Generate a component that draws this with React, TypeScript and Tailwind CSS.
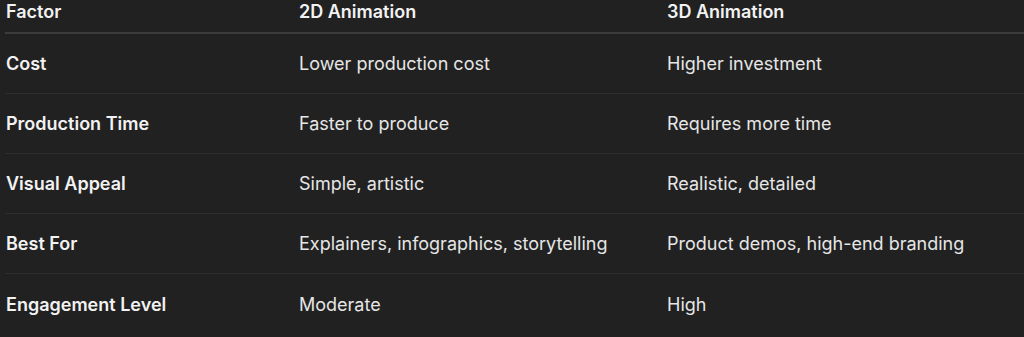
const rows = [
  ['Cost', 'Lower production cost', 'Higher investment'],
  ['Production Time', 'Faster to produce', 'Requires more time'],
  ['Visual Appeal', 'Simple, artistic', 'Realistic, detailed'],
  ['Best For', 'Explainers, infographics, storytelling', 'Product demos, high-end branding'],
  ['Engagement Level', 'Moderate', 'High'],
];

export default function App() {
  return (
    <div className="w-[1024px] h-[337px] overflow-hidden bg-[#212121] font-['Inter','Noto_Sans',sans-serif] text-[18px]">
      <div className="ml-[5px]">
        <div className="grid grid-cols-[294px_368px_1fr] h-[34px] border-b-2 border-[#3b3b3b] font-semibold text-[#f2f2f2] leading-[24px]">
          <div className="pl-[1px]">Factor</div>
          <div>2D Animation</div>
          <div>3D Animation</div>
        </div>
        {rows.map((r, i) => (
          <div
            key={i}
            className={`grid grid-cols-[294px_368px_1fr] h-[60px] items-center pt-[1px] ${
              i < rows.length - 1 ? 'border-b border-[#2e2e2e]' : ''
            } leading-[24px]`}
          >
            <div className="pl-[1px] font-semibold text-[#f2f2f2]">{r[0]}</div>
            <div className="text-[#e6e6e6]">{r[1]}</div>
            <div className="text-[#e6e6e6]">{r[2]}</div>
          </div>
        ))}
      </div>
    </div>
  );
}
